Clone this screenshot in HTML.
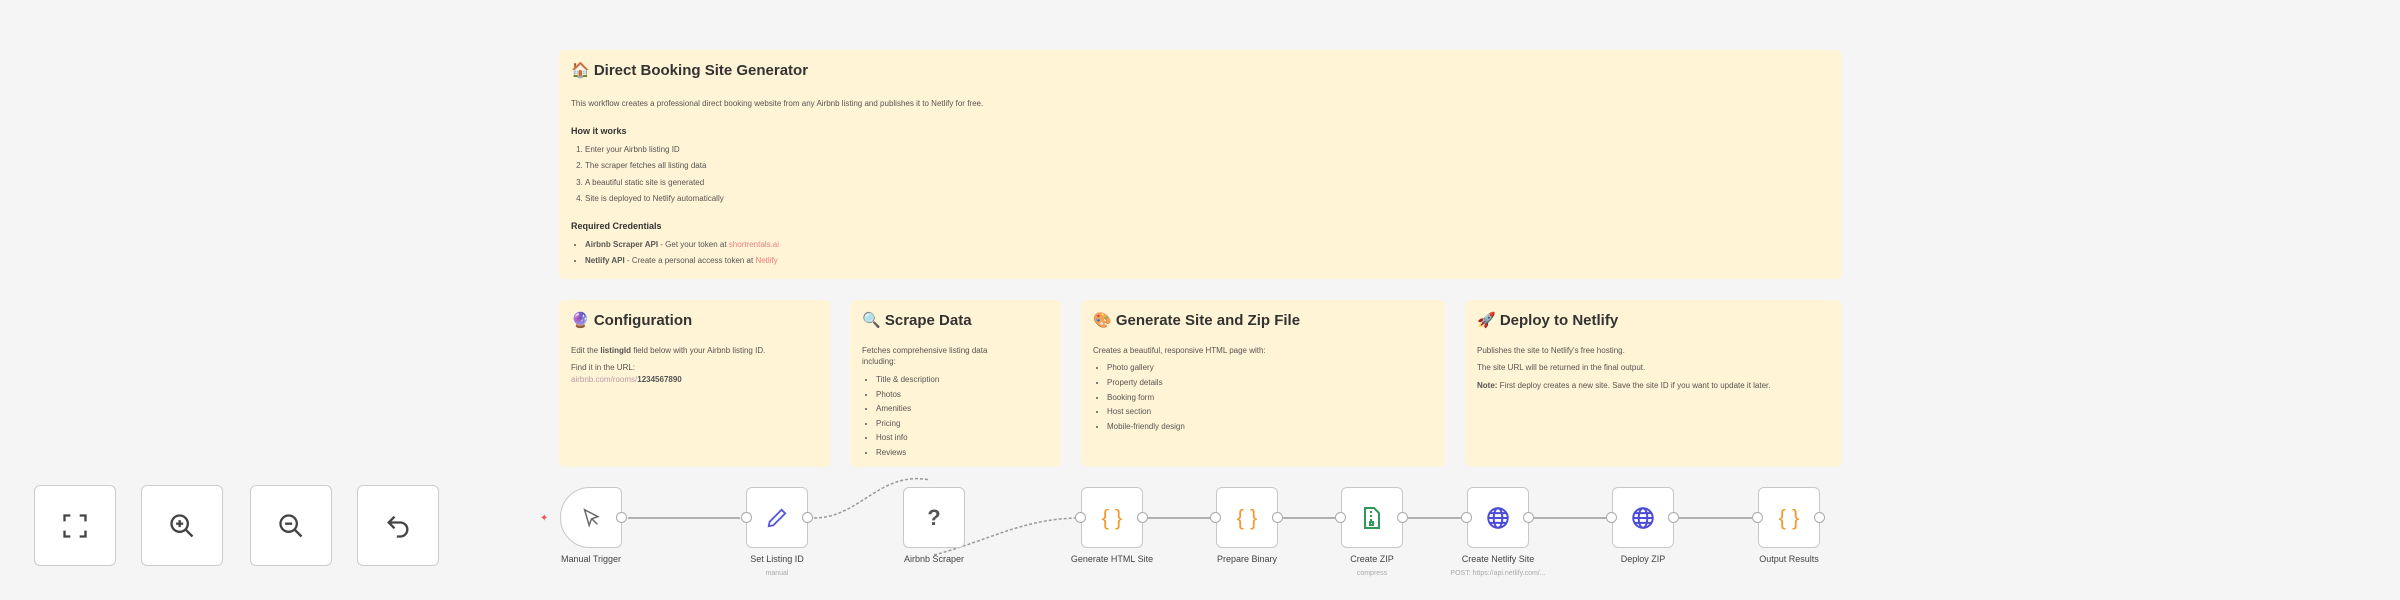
<!DOCTYPE html>
<html><head><meta charset="utf-8"><style>
*{box-sizing:border-box;margin:0;padding:0}
body{width:2400px;height:600px;overflow:hidden;background:#f5f5f5;font-family:"Liberation Sans","Noto Sans CJK SC",sans-serif;color:#333;position:relative}
.note{position:absolute;background:#fff4d5;border-radius:6px;padding:8px 12px;font-size:8px;line-height:1.45;color:#555}
.note h1{font-size:15px;color:#333;font-weight:bold;margin:2px 0 13px 0}
.note h2{font-size:9px;color:#333;font-weight:bold;margin:10px 0 4px}
.note p{margin-bottom:6px}
.note ol,.note ul{padding-left:14px}
.note li{margin-bottom:3px}
.main{font-size:8px}
.main h1{margin-bottom:16px}
.main h2{margin:16px 0 6px}
.main li{margin-bottom:4.5px}
.main p{margin-bottom:8px}
.red{color:#f08080}
.btn{position:absolute;top:485px;width:82px;height:81px;background:#fff;border:1.5px solid #ccc;border-radius:6px;display:flex;align-items:center;justify-content:center}
.node{position:absolute;top:487px;width:62px;height:61px;background:#fff;border:1.5px solid #c8c8c8;border-radius:6px;display:flex;align-items:center;justify-content:center;font-size:22px}
.lbl{position:absolute;top:554px;width:160px;text-align:center;font-size:9px;color:#444}
.sub{position:absolute;top:570px;width:160px;text-align:center;font-size:7px;color:#aaa}
.port{position:absolute;width:11px;height:11px;border-radius:50%;background:#fff;border:1.5px solid #aaa;top:512px}
</style></head><body>
<div class="note main" style="left:559px;top:50px;width:1283px;height:229px">
<h1>🏠 Direct Booking Site Generator</h1>
<p>This workflow creates a professional direct booking website from any Airbnb listing and publishes it to Netlify for free.</p>
<h2>How it works</h2>
<ol><li>Enter your Airbnb listing ID</li><li>The scraper fetches all listing data</li><li>A beautiful static site is generated</li><li>Site is deployed to Netlify automatically</li></ol>
<h2>Required Credentials</h2>
<ul><li><b>Airbnb Scraper API</b> - Get your token at <span class="red">shortrentals.ai</span></li><li><b>Netlify API</b> - Create a personal access token at <span class="red">Netlify</span></li></ul>
</div>
<div class="note" style="left:559px;top:300px;width:272px;height:167px"><h1>🔮 Configuration</h1><p>Edit the <b>listingId</b> field below with your Airbnb listing ID.</p><p>Find it in the URL:<br><span style="color:#b9a">airbnb.com/rooms/</span><b>1234567890</b></p></div>
<div class="note" style="left:850px;top:300px;width:211px;height:167px;padding-right:40px"><h1 style="white-space:nowrap">🔍 Scrape Data</h1><p>Fetches comprehensive listing data including:</p><ul><li>Title &amp; description</li><li>Photos</li><li>Amenities</li><li>Pricing</li><li>Host info</li><li>Reviews</li></ul></div>
<div class="note" style="left:1081px;top:300px;width:364px;height:167px"><h1>🎨 Generate Site and Zip File</h1><p>Creates a beautiful, responsive HTML page with:</p><ul><li>Photo gallery</li><li>Property details</li><li>Booking form</li><li>Host section</li><li>Mobile-friendly design</li></ul></div>
<div class="note" style="left:1465px;top:300px;width:377px;height:167px"><h1>🚀 Deploy to Netlify</h1><p>Publishes the site to Netlify's free hosting.</p><p>The site URL will be returned in the final output.</p><p><b>Note:</b> First deploy creates a new site. Save the site ID if you want to update it later.</p></div>

<div class="btn" style="left:34px"><svg width="28" height="28" viewBox="0 0 24 24" fill="none" stroke="#444" stroke-width="2"><path d="M3 8V3h5M16 3h5v5M21 16v5h-5M8 21H3v-5"/></svg></div>
<div class="btn" style="left:141px"><svg width="28" height="28" viewBox="0 0 24 24" fill="none" stroke="#444" stroke-width="2"><circle cx="10" cy="10" r="7"/><path d="M15 15l6 6M10 7v6M7 10h6"/></svg></div>
<div class="btn" style="left:250px"><svg width="28" height="28" viewBox="0 0 24 24" fill="none" stroke="#444" stroke-width="2"><circle cx="10" cy="10" r="7"/><path d="M15 15l6 6M7 10h6"/></svg></div>
<div class="btn" style="left:357px"><svg width="28" height="28" viewBox="0 0 24 24" fill="none" stroke="#444" stroke-width="2"><path d="M9 4L4 9l5 5M4 9h10a6 6 0 010 12h-3"/></svg></div>

<svg style="position:absolute;left:0;top:0" width="2400" height="600" fill="none" stroke="#999" stroke-width="1.5">
<path d="M628 518H740"/>
<path d="M814 518C860 518 880 470 930 480" stroke-dasharray="3 2"/>
<path d="M934 555C990 540 1020 520 1075 518" stroke-dasharray="3 2"/>
<path d="M1148 518H1210M1283 518H1335M1408 518H1461M1534 518H1606M1679 518H1752"/>
</svg>
<div style="position:absolute;left:540px;top:513px;color:#e55;font-size:10px">✦</div>

<div class="node" style="left:560px;border-radius:30px 6px 6px 30px"><svg width="22" height="22" viewBox="0 0 24 24" fill="none" stroke="#666" stroke-width="1.6"><path d="M5 3l5 17 2.5-7 7-2.5z"/><path d="M13 13l6 6"/></svg></div>
<div class="node" style="left:746px"><svg width="22" height="22" viewBox="0 0 24 24" fill="none" stroke="#5656d8" stroke-width="2"><path d="M17 3l4 4L8 20l-5 1 1-5z"/></svg></div>
<div class="node" style="left:903px;font-weight:bold;color:#555">?</div>
<div class="node" style="left:1081px;color:#f39a2c">{ }</div>
<div class="node" style="left:1216px;color:#f39a2c">{ }</div>
<div class="node" style="left:1341px"><svg width="20" height="24" viewBox="0 0 20 24" fill="none" stroke="#2f9a5a" stroke-width="2"><path d="M3 2h9l5 5v15H3zM9 5v2M9 9v2M9 13v2"/><rect x="8" y="16" width="3" height="3"/></svg></div>
<div class="node" style="left:1467px"><svg width="26" height="26" viewBox="0 0 24 24" fill="none" stroke="#4b4bd8" stroke-width="1.8"><circle cx="12" cy="12" r="9"/><ellipse cx="12" cy="12" rx="4" ry="9"/><path d="M3 12h18M4.5 7.5h15M4.5 16.5h15"/></svg></div>
<div class="node" style="left:1612px"><svg width="26" height="26" viewBox="0 0 24 24" fill="none" stroke="#4b4bd8" stroke-width="1.8"><circle cx="12" cy="12" r="9"/><ellipse cx="12" cy="12" rx="4" ry="9"/><path d="M3 12h18M4.5 7.5h15M4.5 16.5h15"/></svg></div>
<div class="node" style="left:1758px;color:#f39a2c">{ }</div>

<div class="port" style="left:616px"></div>
<div class="port" style="left:741px"></div><div class="port" style="left:802px"></div>
<div class="port" style="left:1075px"></div><div class="port" style="left:1137px"></div>
<div class="port" style="left:1210px"></div><div class="port" style="left:1272px"></div>
<div class="port" style="left:1335px"></div><div class="port" style="left:1397px"></div>
<div class="port" style="left:1461px"></div><div class="port" style="left:1523px"></div>
<div class="port" style="left:1606px"></div><div class="port" style="left:1668px"></div>
<div class="port" style="left:1752px"></div><div class="port" style="left:1814px"></div>

<div class="lbl" style="left:511px">Manual Trigger</div>
<div class="lbl" style="left:697px">Set Listing ID</div><div class="sub" style="left:697px">manual</div>
<div class="lbl" style="left:854px">Airbnb Scraper</div>
<div class="lbl" style="left:1032px">Generate HTML Site</div>
<div class="lbl" style="left:1167px">Prepare Binary</div>
<div class="lbl" style="left:1292px">Create ZIP</div><div class="sub" style="left:1292px">compress</div>
<div class="lbl" style="left:1418px">Create Netlify Site</div><div class="sub" style="left:1418px">POST: https://api.netlify.com/...</div>
<div class="lbl" style="left:1563px">Deploy ZIP</div>
<div class="lbl" style="left:1709px">Output Results</div>
</body></html>
